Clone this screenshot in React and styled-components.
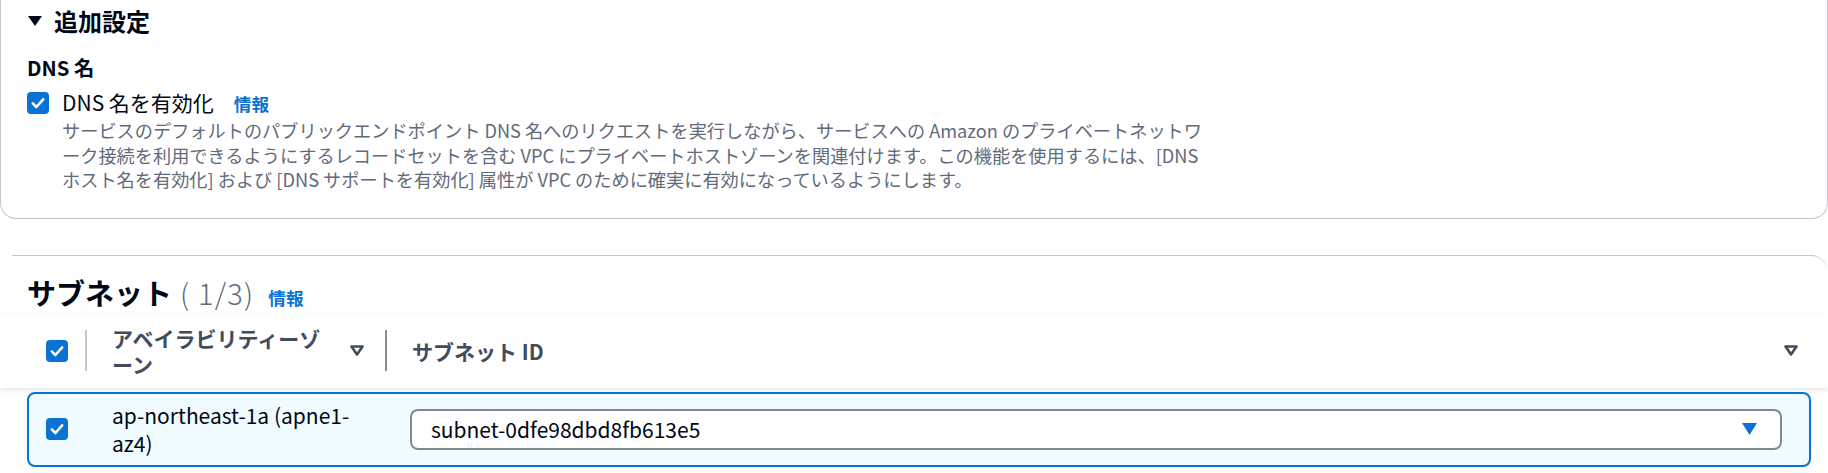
import React from 'react';
import styled, { createGlobalStyle } from 'styled-components';

const GlobalStyle = createGlobalStyle`
  html, body {
    margin: 0;
    padding: 0;
    background: #ffffff;
    overflow: hidden;
  }
  body {
    font-family: "Noto Sans CJK JP", "Noto Sans", sans-serif;
    color: #000716;
  }
`;

const Page = styled.div`
  width: 1828px;
  height: 473px;
  overflow: hidden;
`;

const Card = styled.div`
  border: 1px solid #c6c6cd;
  border-top: none;
  border-radius: 0 0 16px 16px;
  padding: 5px 26px 26px 26px;
`;

const ExpandHeader = styled.div`
  display: flex;
  align-items: center;
  gap: 12px;
  padding-left: 1px;
  font-size: 24px;
  font-weight: 700;
  line-height: 32px;
`;

const FieldLabel = styled.div`
  margin-top: 15px;
  font-size: 20.3px;
  font-weight: 700;
  line-height: 30px;
`;

const CheckRow = styled.div`
  display: flex;
  align-items: flex-start;
  gap: 13px;
  margin-top: 6px;
`;

const BoxWrap = styled.span`
  display: inline-flex;
  margin-top: ${(p) => p.$offset || 0}px;
`;

const LabelLine = styled.div`
  display: flex;
  align-items: baseline;
  gap: 20px;
  font-size: 21px;
  line-height: 29px;
`;

const InfoLink = styled.span`
  color: #0972d3;
  font-weight: 700;
  font-size: 17.6px;
  margin-left: ${(p) => p.$gap || 0}px;
`;

const Desc = styled.div`
  font-size: 18.2px;
  line-height: 24.5px;
  color: #5f6b7a;
  white-space: nowrap;
`;

const Section = styled.section`
  margin: 36px 1px 0 12px;
  border-top: 1px solid #c6c6cd;
  border-top-right-radius: 16px;
  padding: 17px 0 0 15px;
`;

const Title = styled.h2`
  margin: 0;
  display: flex;
  align-items: baseline;
  font-size: 29px;
  line-height: 38px;
  font-weight: 700;
`;

const Counter = styled.span`
  margin-left: 8px;
  font-weight: 300;
  letter-spacing: 1.2px;
  color: #5f6b7a;
`;

const HeaderStrip = styled.div`
  position: relative;
  z-index: 1;
  margin-top: -3px;
  padding: 0 17px 0 27px;
  background: #ffffff;
  box-shadow: 0 2px 5px rgba(0, 7, 22, 0.1);
`;

const HeaderGrid = styled.div`
  display: grid;
  grid-template-columns: 58px 300px 1fr;
  height: 74px;
`;

const HeadCell = styled.div`
  display: flex;
  align-items: center;
  padding-left: ${(p) => p.$padLeft || 0}px;
  padding-right: ${(p) => p.$padRight || 0}px;
`;

const Divider = styled.span`
  flex: none;
  width: 2px;
  height: 41px;
  background: ${(p) => (p.$dark ? '#8c8c94' : '#c6c6cd')};
`;

const HeadText = styled.span`
  flex: 1;
  margin: 0 18px 0 25px;
  font-size: 21px;
  font-weight: 700;
  line-height: 26px;
  color: #414d5c;
`;

const Body = styled.div`
  padding: 4px 17px 0 27px;
`;

const Row = styled.div`
  display: grid;
  grid-template-columns: 56px 300px 1fr;
  align-items: center;
  box-sizing: border-box;
  height: 75px;
  border: 2px solid #0972d3;
  border-radius: 8px;
  background: #f0fbff;
`;

const Cell = styled.div`
  display: flex;
  align-items: center;
  padding-left: ${(p) => p.$padLeft || 0}px;
  padding-right: ${(p) => p.$padRight || 0}px;
  font-size: 21px;
  line-height: 28px;
`;

const Select = styled.div`
  flex: 1;
  display: flex;
  align-items: center;
  justify-content: space-between;
  box-sizing: border-box;
  height: 41px;
  padding: 0 23px 0 19px;
  border: 2px solid #7d8998;
  border-radius: 8px;
  background: #ffffff;
  font-size: 21px;
`;

const Checkbox = ({ offset }) => (
  <BoxWrap $offset={offset}>
    <svg width="22" height="22" viewBox="0 0 22 22">
      <rect x="0" y="0" width="22" height="22" rx="4" fill="#0972d3" />
      <polyline
        points="5.8,11.4 9.4,15 16.2,7.4"
        fill="none"
        stroke="#ffffff"
        strokeWidth="2.6"
        strokeLinecap="round"
        strokeLinejoin="round"
      />
    </svg>
  </BoxWrap>
);

const SortIcon = () => (
  <svg width="14" height="11" viewBox="0 0 14 11">
    <polygon
      points="1.5,1.5 12.5,1.5 7,9.5"
      fill="none"
      stroke="#414d5c"
      strokeWidth="2.6"
      strokeLinejoin="round"
    />
  </svg>
);

const Caret = ({ color, w, h }) => (
  <svg width={w} height={h} viewBox={`0 0 ${w} ${h}`}>
    <polygon points={`0,0 ${w},0 ${w / 2},${h}`} fill={color} />
  </svg>
);

export default function App() {
  return (
    <Page>
      <GlobalStyle />
      <Card>
        <ExpandHeader>
          <Caret color="#000716" w={14} h={10} />
          <span>追加設定</span>
        </ExpandHeader>
        <FieldLabel>DNS 名</FieldLabel>
        <CheckRow>
          <Checkbox offset={4} />
          <div>
            <LabelLine>
              <span>DNS 名を有効化</span>
              <InfoLink>情報</InfoLink>
            </LabelLine>
            <Desc>
              サービスのデフォルトのパブリックエンドポイント DNS 名へのリクエストを実行しながら、サービスへの Amazon のプライベートネットワ
              <br />
              ーク接続を利用できるようにするレコードセットを含む VPC にプライベートホストゾーンを関連付けます。この機能を使用するには、[DNS
              <br />
              ホスト名を有効化] および [DNS サポートを有効化] 属性が VPC のために確実に有効になっているようにします。
            </Desc>
          </div>
        </CheckRow>
      </Card>

      <Section>
        <Title>
          サブネット
          <Counter>( 1/3)</Counter>
          <InfoLink $gap={14}>情報</InfoLink>
        </Title>
      </Section>

      <HeaderStrip>
        <HeaderGrid>
          <HeadCell $padLeft={19}>
            <Checkbox />
          </HeadCell>
          <HeadCell $padRight={21}>
            <Divider />
            <HeadText>アベイラビリティーゾーン</HeadText>
            <SortIcon />
          </HeadCell>
          <HeadCell $padRight={13}>
            <Divider $dark />
            <HeadText>サブネット ID</HeadText>
            <SortIcon />
          </HeadCell>
        </HeaderGrid>
      </HeaderStrip>

      <Body>
        <Row>
          <Cell $padLeft={17}>
            <Checkbox />
          </Cell>
          <Cell $padLeft={27} $padRight={8}>
            ap-northeast-1a (apne1-az4)
          </Cell>
          <Cell $padLeft={25} $padRight={27}>
            <Select>
              <span>subnet-0dfe98dbd8fb613e5</span>
              <Caret color="#0972d3" w={15} h={12} />
            </Select>
          </Cell>
        </Row>
      </Body>
    </Page>
  );
}
